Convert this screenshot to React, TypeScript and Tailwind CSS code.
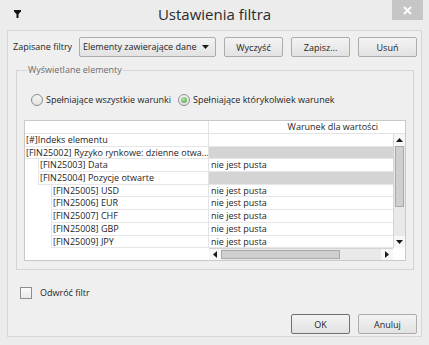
import React from 'react';

// Dialog: "Ustawienia filtra" (Windows 8 style)

const Triangle = ({ dir }: { dir: 'up' | 'down' | 'left' | 'right' }) => {
  const pts: Record<string, string> = {
    up: '0,4 3.5,0 7,4',
    down: '0,0 7,0 3.5,4',
    left: '4,0 4,7 0,3.5',
    right: '0,0 0,7 4,3.5',
  };
  const vertical = dir === 'up' || dir === 'down';
  return (
    <svg width={vertical ? 7 : 4} height={vertical ? 4 : 7} viewBox={vertical ? '0 0 7 4' : '0 0 4 7'}>
      <polygon points={pts[dir]} fill="#1a1a1a" />
    </svg>
  );
};

const Button = ({ label, primary }: { label: string; primary?: boolean }) => (
  <button
    className={`h-[20px] w-[59px] rounded-[2px] border bg-linear-to-b from-[#f3f3f3] to-[#e2e2e2] text-[9px] leading-none text-[#1e1e1e] ${
      primary ? 'border-[#707070]' : 'border-[#acacac]'
    }`}
  >
    {label}
  </button>
);

type Row = { label: string; indent: 0 | 1 | 2; value?: string; gray?: boolean };

const rows: Row[] = [
  { label: '[#]Indeks elementu', indent: 0 },
  { label: '[FIN25002] Ryzyko rynkowe: dzienne otwa...', indent: 0, gray: true },
  { label: '[FIN25003] Data', indent: 1, value: 'nie jest pusta' },
  { label: '[FIN25004] Pozycje otwarte', indent: 1, gray: true },
  { label: '[FIN25005] USD', indent: 2, value: 'nie jest pusta' },
  { label: '[FIN25006] EUR', indent: 2, value: 'nie jest pusta' },
  { label: '[FIN25007] CHF', indent: 2, value: 'nie jest pusta' },
  { label: '[FIN25008] GBP', indent: 2, value: 'nie jest pusta' },
  { label: '[FIN25009] JPY', indent: 2, value: 'nie jest pusta' },
];

const indentClass = ['pl-0', 'pl-[13px]', 'pl-[26px]'];

const Grip = () => (
  <div className="h-full w-full bg-[radial-gradient(circle,#9a9a9a_40%,transparent_45%)] bg-size-[2px_2px]" />
);

const App: React.FC = () => {
  return (
    <div className="w-[429px] h-[345px] bg-[#ececec] flex flex-col font-['Open_Sans',sans-serif] text-[#1e1e1e] overflow-hidden">
      {/* Title bar */}
      <div className="h-[30px] grid grid-cols-[1fr_auto_1fr] shrink-0">
        <div className="pl-[14px] pt-[10px]">
          <svg width="7" height="8" viewBox="0 0 7 8">
            <polygon points="0,0 7,0 7,1.5 4.5,4 4.5,8 2.5,8 2.5,4 0,1.5" fill="#111" />
          </svg>
        </div>
        <div className="text-[15px] leading-[28px] text-[#2b2b2b]">Ustawienia filtra</div>
        <div className="flex justify-end">
          <div className="mr-[6px] w-[31px] h-[20px] bg-[#c6c6c6] flex items-center justify-center">
            <svg width="9" height="9" viewBox="0 0 9 9">
              <path d="M1 1 L8 8 M8 1 L1 8" stroke="#fff" strokeWidth="1.8" />
            </svg>
          </div>
        </div>
      </div>

      {/* Client area */}
      <div className="mx-[7px] h-[307px] border border-[#d6d6d6] bg-[#efefef] flex flex-col shrink-0">
        {/* Saved filters row */}
        <div className="mt-[6px] pl-[5px] pr-[4px] flex items-center h-[20px]">
          <span className="w-[66px] text-[9px] whitespace-nowrap">Zapisane filtry</span>
          <div className="w-[137px] h-[20px] border border-[#acacac] rounded-[2px] bg-linear-to-b from-[#f3f3f3] to-[#e2e2e2] flex items-center pl-[3px] pr-[6px]">
            <span className="flex-1 text-[9px] whitespace-nowrap">Elementy zawierające dane</span>
            <Triangle dir="down" />
          </div>
          <div className="ml-auto flex gap-[8px]">
            <Button label="Wyczyść" />
            <Button label="Zapisz..." />
            <Button label="Usuń" />
          </div>
        </div>

        {/* Group box */}
        <fieldset className="mt-[7px] ml-[8px] mr-[7px] h-[206px] border border-[#d5d5d5] px-[7px]">
          <legend className="ml-[3px] px-[1px] text-[9px] leading-[12px] text-[#6b6b6b]">Wyświetlane elementy</legend>

          <div className="mt-[18px] flex items-center h-[12px] text-[9px]">
            <div className="ml-[7px] w-[12px] h-[12px] rounded-full border border-[#8c8c8c] bg-linear-to-b from-[#f4f4f4] to-[#e4e4e4]" />
            <span className="ml-[3px] whitespace-nowrap">Spełniające wszystkie warunki</span>
            <div className="ml-[7px] w-[12px] h-[12px] rounded-full border border-[#8c8c8c] bg-linear-to-b from-[#f4f4f4] to-[#e4e4e4] flex items-center justify-center">
              <div className="w-[6px] h-[6px] rounded-full bg-[radial-gradient(circle_at_40%_35%,#b7e6a8,#3f9a3a)]" />
            </div>
            <span className="ml-[3px] whitespace-nowrap">Spełniające którykolwiek warunek</span>
          </div>

          {/* Table */}
          <div className="mt-[14px] h-[141px] border border-[#c9c9c9] bg-white flex flex-col text-[9px]">
            <div className="h-[13px] shrink-0 flex border-b border-[#e3e3e3]">
              <div className="w-[184px] border-r border-[#e3e3e3]" />
              <div className="flex-1 text-right pr-[27px] leading-[12px] whitespace-nowrap">Warunek dla wartości</div>
            </div>

            <div className="h-[114px] shrink-0 flex">
              <div className="flex-1 flex flex-col overflow-hidden">
                {rows.map((r) => (
                  <div key={r.label} className="h-[12.7px] shrink-0 flex">
                    <div className={`w-[184px] shrink-0 border-r border-[#e3e3e3] ${indentClass[r.indent]}`}>
                      <div
                        className={`h-full border-b border-[#e6e6e6] pl-[1px] leading-[12px] whitespace-nowrap overflow-hidden ${
                          r.indent > 0 ? 'border-l' : ''
                        }`}
                      >
                        {r.label}
                      </div>
                    </div>
                    <div
                      className={`flex-1 border-b border-[#e6e6e6] pl-[2px] leading-[12px] whitespace-nowrap ${
                        r.gray ? 'bg-[#d4d4d4]' : ''
                      }`}
                    >
                      {r.value}
                    </div>
                  </div>
                ))}
              </div>
              {/* Vertical scrollbar */}
              <div className="w-[12px] shrink-0 flex flex-col bg-[#e9e9e9] border-l border-[#d4d4d4]">
                <div className="h-[12px] bg-[#f7f7f7] flex items-center justify-center">
                  <Triangle dir="up" />
                </div>
                <div className="h-[61px] mx-[1px] border border-[#a9a9a9] bg-[#cfcfcf] py-[10px] px-[2px]">
                  <Grip />
                </div>
                <div className="flex-1" />
                <div className="h-[12px] bg-[#f7f7f7] flex items-center justify-center">
                  <Triangle dir="down" />
                </div>
              </div>
            </div>

            {/* Horizontal scrollbar */}
            <div className="h-[12px] shrink-0 flex">
              <div className="w-[184px] shrink-0" />
              <div className="flex-1 flex bg-[#e9e9e9] border-t border-[#d4d4d4]">
                <div className="w-[12px] bg-[#f7f7f7] flex items-center justify-center">
                  <Triangle dir="left" />
                </div>
                <div className="w-[119px] my-[1px] border border-[#a9a9a9] bg-[#cfcfcf] px-[44px] py-[2px]">
                  <Grip />
                </div>
                <div className="flex-1" />
                <div className="w-[12px] bg-[#f7f7f7] flex items-center justify-center">
                  <Triangle dir="right" />
                </div>
              </div>
              <div className="w-[12px] shrink-0" />
            </div>
          </div>
        </fieldset>

        {/* Invert filter */}
        <div className="mt-[17px] ml-[12px] flex items-center h-[12px]">
          <div className="w-[12px] h-[12px] border border-[#8f8f8f] bg-linear-to-b from-[#fafafa] to-[#e9e9e9]" />
          <span className="ml-[8px] text-[9px] whitespace-nowrap">Odwróć filtr</span>
        </div>

        {/* Dialog buttons */}
        <div className="mt-[15px] pr-[4px] flex justify-end gap-[8px]">
          <Button label="OK" primary />
          <Button label="Anuluj" />
        </div>
      </div>
    </div>
  );
};

export default App;
